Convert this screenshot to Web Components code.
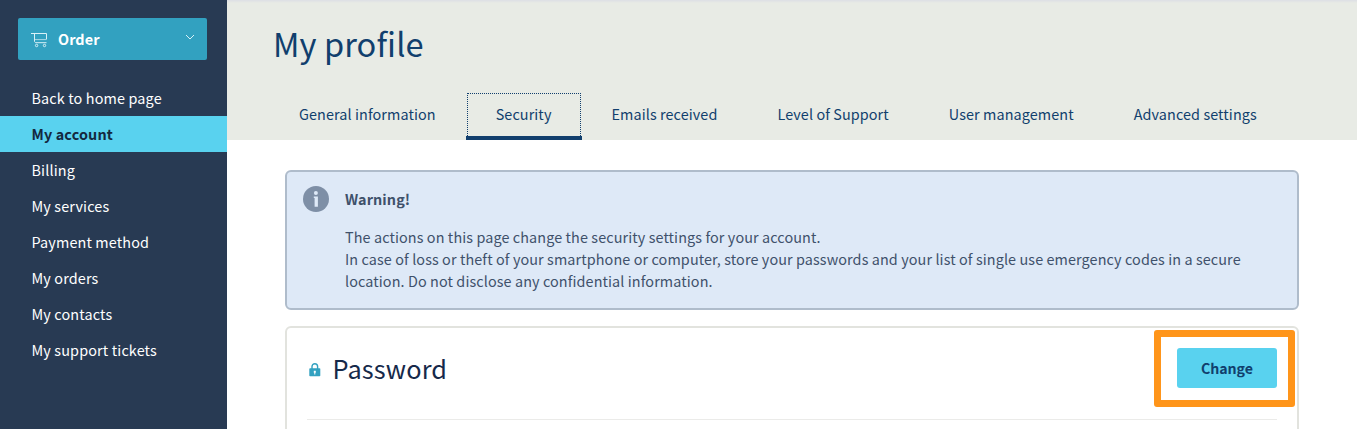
<!DOCTYPE html>
<html lang="en">
<head>
<meta charset="utf-8">
<title>My profile</title>
<style>
html,body{margin:0;height:100%;overflow:hidden;background:#fff}
body{font:400 14.4px/22px "Noto Sans CJK SC","Noto Sans",sans-serif;letter-spacing:.098px}
</style>
</head>
<body>
<account-page></account-page>
<script>
const define = (name, html) => {
  const template = document.createElement('template');
  template.innerHTML = html;
  customElements.define(name, class extends HTMLElement {
    constructor() {
      super();
      this.attachShadow({mode: 'open'}).append(template.content.cloneNode(true));
    }
  });
};

define('order-button', `
<style>
:host{display:block}
button{all:unset;box-sizing:border-box;display:flex;align-items:center;width:189px;height:42px;padding:0 12px 0 13px;border-radius:2px;background:#32a1c0;color:#fff;font-weight:700;letter-spacing:.08px}
.cart{width:17px;height:16px;margin-right:10px;margin-top:2px}
.label{flex:1}
.chevron{width:10px;height:6px;margin-bottom:5px}
svg{display:block;fill:none;stroke:#d9f1f7}
</style>
<button>
<svg class="cart" viewBox="0 0 17 16"><path d="M0 1.5h15.5v5.8M3.5 1.5v8l1 1.2h11"/><path d="M3.5 7.6h12" stroke-opacity=".7"/><circle cx="5.6" cy="13.5" r="1.2"/><circle cx="13.5" cy="13.5" r="1.2"/></svg>
<span class="label"><slot></slot></span>
<svg class="chevron" viewBox="0 0 10 6"><path d="M1 1l4 4 4-4"/></svg>
</button>`);

define('nav-item', `
<style>
:host{display:block;height:36px;line-height:36px;padding-left:31.5px;color:#fff;letter-spacing:.14px}
:host([active]){background:#59d2ef;color:#14293f;font-weight:700}
</style><slot></slot>`);

define('side-bar', `
<style>
:host{display:block;box-sizing:border-box;width:227px;background:#283a53;padding-top:18px}
order-button{margin:0 0 20px 18px}
</style>
<order-button>Order</order-button>
<nav><slot></slot></nav>`);

define('tab-item', `
<style>
:host{display:block;position:relative;box-sizing:border-box;height:47px;line-height:42px;padding:0 30px;border-bottom:4px solid transparent;white-space:nowrap;letter-spacing:.092px}
:host([active]){border-color:#113f6d;padding-right:30.7px;margin-right:-.7px}
:host([active])::before{content:"";position:absolute;inset:0 1px;border:1px dotted #113f6d;border-bottom:0}
</style><slot></slot>`);

define('page-header', `
<style>
:host{display:block;box-sizing:border-box;height:140px;background:linear-gradient(#dddfe5,#e8ebe5 3px);color:#113f6d;padding-top:18px}
h1{margin:0 0 25px 46px;font-size:32.6px;line-height:50px;font-weight:400;letter-spacing:.08px}
div{display:flex;margin-left:42px}
</style>
<h1><slot name="title"></slot></h1><div><slot></slot></div>`);

define('alert-box', `
<style>
:host{display:flex;box-sizing:border-box;height:140px;border:2px solid #afbccb;border-radius:6px;background:#dee9f7;color:#3f516b;padding:14px 40px 0 16px}
svg{flex:none;width:26px;height:26px;margin-right:16px}
h2{margin:2px 0 16px;font-size:inherit;line-height:22px}
</style>
<svg viewBox="0 0 26 26"><circle cx="13" cy="13" r="13" fill="#7e8fa6"/><circle cx="12.9" cy="7" r="2" fill="#dee9f7"/><path d="M10.8 10.5h4.1v10.3h-3.3v-8.7h-.8z" fill="#dee9f7"/></svg>
<div><h2><slot name="title"></slot></h2><slot></slot></div>`);

define('action-button', `
<style>
:host{display:block;position:relative}
button{all:unset;display:block;width:100px;height:40px;line-height:40px;border-radius:3px;background:#59d2ef;color:#113f6d;text-align:center;font-weight:700;font-size:14.2px;letter-spacing:-.08px}
i{position:absolute;box-sizing:border-box;left:-23px;top:-18.5px;width:141px;height:77.5px;border:7px solid #ff951a;border-radius:3px}
</style><button><slot></slot></button><i></i>`);

define('setting-card', `
<style>
:host{display:block;box-sizing:border-box;height:140px;border:2px solid #e2e3de;border-radius:6px;padding:20px 20px 0}
header{display:flex;align-items:flex-start;height:71px;border-bottom:1px solid #ebebe9}
svg{width:12px;height:14px;margin:15px 12px 0 1.5px}
h2{margin:0;flex:1;color:#16294a;font-weight:400;font-size:25.3px;line-height:40px;letter-spacing:.15px}
</style>
<header>
<svg viewBox="0 0 12 14"><path d="M3 6V3.5a2.8 2.8 0 0 1 5.6 0V6" fill="none" stroke="#32a1c0" stroke-width="1.4"/><rect x=".3" y="5.3" width="11" height="8" rx=".8" fill="#32a1c0"/><path d="M4.8 7.7h2v2h-.5v1.8h-1V9.7h-.5z" fill="#fff"/></svg>
<h2><slot></slot></h2><slot name="action"></slot>
</header>`);

define('account-page', `
<style>
:host{display:grid;grid-template-columns:227px 1fr;height:429px;overflow:hidden}
section{padding:30px 58px 0}
setting-card{margin-top:16px}
</style>
<side-bar><nav-item>Back to home page</nav-item><nav-item active>My account</nav-item><nav-item>Billing</nav-item><nav-item>My services</nav-item><nav-item>Payment method</nav-item><nav-item>My orders</nav-item><nav-item>My contacts</nav-item><nav-item>My support tickets</nav-item></side-bar>
<main>
<page-header><span slot="title">My profile</span><tab-item>General information</tab-item><tab-item active>Security</tab-item><tab-item>Emails received</tab-item><tab-item>Level of Support</tab-item><tab-item>User management</tab-item><tab-item>Advanced settings</tab-item></page-header>
<section>
<alert-box><span slot="title">Warning!</span>The actions on this page change the security settings for your account.<br>In case of loss or theft of your smartphone or computer, store your passwords and your list of single use emergency codes in a secure location. Do not disclose any confidential information.</alert-box>
<setting-card>Password<action-button slot="action">Change</action-button></setting-card>
</section>
</main>`);
</script>
</body>
</html>
